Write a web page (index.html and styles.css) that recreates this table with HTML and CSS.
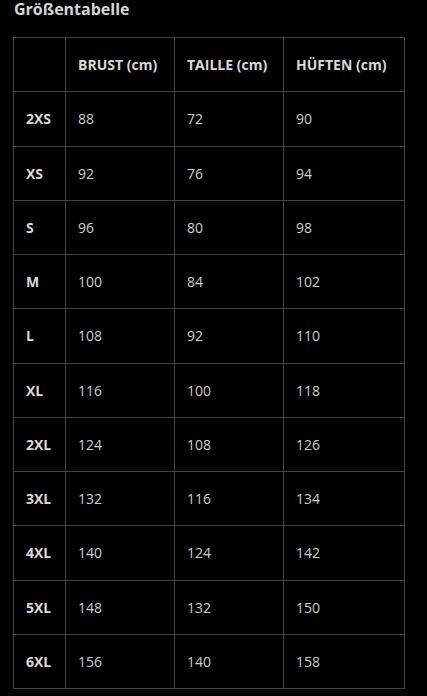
FILE: index.html
```html
<!DOCTYPE html>
<html lang="de">
<head>
<meta charset="utf-8">
<link rel="stylesheet" href="styles.css">
</head>
<body>
<h2 class="title">Größentabelle</h2>
<table class="sizes">
<thead>
<tr><th></th><th>BRUST (cm)</th><th>TAILLE (cm)</th><th>HÜFTEN (cm)</th></tr>
</thead>
<tbody>
<tr><th>2XS</th><td>88</td><td>72</td><td>90</td></tr>
<tr><th>XS</th><td>92</td><td>76</td><td>94</td></tr>
<tr><th>S</th><td>96</td><td>80</td><td>98</td></tr>
<tr><th>M</th><td>100</td><td>84</td><td>102</td></tr>
<tr><th>L</th><td>108</td><td>92</td><td>110</td></tr>
<tr><th>XL</th><td>116</td><td>100</td><td>118</td></tr>
<tr><th>2XL</th><td>124</td><td>108</td><td>126</td></tr>
<tr><th>3XL</th><td>132</td><td>116</td><td>134</td></tr>
<tr><th>4XL</th><td>140</td><td>124</td><td>142</td></tr>
<tr><th>5XL</th><td>148</td><td>132</td><td>150</td></tr>
<tr><th>6XL</th><td>156</td><td>140</td><td>158</td></tr>
</tbody>
</table>
</body>
</html>
```
FILE: styles.css
```css
html, body {
  background: #000;
}
body {
  margin: 0;
  padding: 0 13px;
  font-family: "Open Sans", "DejaVu Sans", sans-serif;
  color: #d0d0d0;
}
.title {
  margin: 0;
  padding-left: 1px;
  font-size: 16px;
  font-weight: 700;
  line-height: 18px;
  color: #d4d4d4;
}
.sizes {
  margin-top: 19px;
  width: 391px;
  border-collapse: collapse;
  font-size: 14px;
  table-layout: fixed;
}
.sizes th, .sizes td {
  border: 1px solid #444;
  height: 54.25px;
  padding: 0 12px;
  text-align: left;
  vertical-align: middle;
  box-sizing: border-box;
}
.sizes th {
  font-weight: 700;
  color: #d8d8d8;
}
.sizes td {
  font-weight: 400;
  color: #cfcfcf;
}
.sizes thead th:nth-child(1) { width: 52px; }
.sizes thead th:nth-child(2) { width: 109px; }
.sizes thead th:nth-child(3) { width: 109px; }
.sizes thead th:nth-child(4) { width: 121px; }
```
